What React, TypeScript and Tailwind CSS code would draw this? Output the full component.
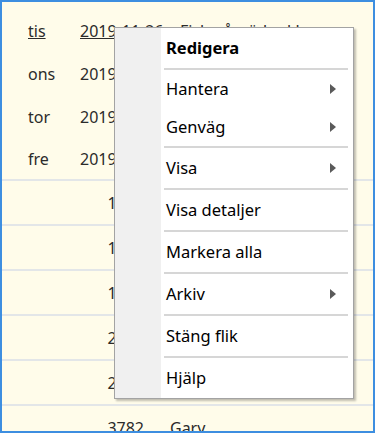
import React from 'react'

type Item = { label: string; bold?: boolean; sub?: boolean; h: number } | 'sep'

const menu: Item[] = [
  { label: 'Redigera', bold: true, h: 40 },
  'sep',
  { label: 'Hantera', sub: true, h: 38 },
  { label: 'Genväg', sub: true, h: 38 },
  'sep',
  { label: 'Visa', sub: true, h: 40 },
  'sep',
  { label: 'Visa detaljer', h: 40 },
  'sep',
  { label: 'Markera alla', h: 40 },
  'sep',
  { label: 'Arkiv', sub: true, h: 40 },
  'sep',
  { label: 'Stäng flik', h: 40 },
  'sep',
  { label: 'Hjälp', h: 40 },
]

const days = [
  { day: 'tis', date: '2019-11-26', text: 'Fiskmåsväder kl', link: true },
  { day: 'ons', date: '2019-11-27', text: '' },
  { day: 'tor', date: '2019-11-28', text: '' },
  { day: 'fre', date: '2019-11-29', text: '' },
]

const numRows = [
  { num: '1205', name: 'Anna' },
  { num: '1340', name: 'Bertil' },
  { num: '1511', name: 'Cecilia' },
  { num: '2208', name: 'David' },
  { num: '2764', name: 'Eva' },
  { num: '3782', name: 'Gary' },
]

function Arrow() {
  return (
    <svg width="6" height="10" viewBox="0 0 6 10" className="shrink-0">
      <path d="M0 0 L6 5 L0 10 Z" fill="#5a5a5a" />
    </svg>
  )
}

export default function App() {
  return (
    <div
      className="relative h-[433px] w-[375px] overflow-hidden border-2 border-[#3d8ee0] bg-[#fffcea] text-[16px] text-[#2b2b2b]"
      style={{ fontFamily: '"Noto Sans", "Open Sans", sans-serif' }}
    >
      <div className="pt-[7px]">
        {days.map((d, i) => (
          <div
            key={d.day}
            className={`flex h-[43px] items-center pl-[26px] ${i === days.length - 1 ? 'border-b-2 border-[#e3e6e8]' : ''}`}
          >
            <span className={`w-[52px] shrink-0 ${d.link ? 'underline' : ''}`}>{d.day}</span>
            <span className={`w-[92px] shrink-0 whitespace-nowrap ${d.link ? 'underline' : ''}`}>{d.date}</span>
            <span className="whitespace-nowrap pl-[8px]">{d.text}</span>
          </div>
        ))}
        {numRows.map((r) => (
          <div key={r.num} className="flex h-[45px] items-center border-b-2 border-[#e3e6e8]">
            <span className="w-[142px] shrink-0 text-right">{r.num}</span>
            <span className="pl-[26px]">{r.name}</span>
          </div>
        ))}
      </div>

      <div className="absolute left-[112px] top-[25px] flex w-[240px] border border-[#a3a3a3] bg-white shadow-[2px_2px_2px_rgba(0,0,0,0.25)]">
        <div className="w-[46px] shrink-0 bg-[#f0f0f0]" />
        <div className="flex flex-1 flex-col text-[16.5px] text-black">
          {menu.map((it, i) =>
            it === 'sep' ? (
              <div key={i} className="ml-[3px] mr-[5px] h-[2px] bg-[#d6d6d6]" />
            ) : (
              <div
                key={i}
                className={`flex items-center justify-between pl-[5px] pr-[17px] ${it.bold ? 'font-bold' : ''}`}
                style={{ height: it.h }}
              >
                <span>{it.label}</span>
                {it.sub && <Arrow />}
              </div>
            ),
          )}
        </div>
      </div>
    </div>
  )
}
